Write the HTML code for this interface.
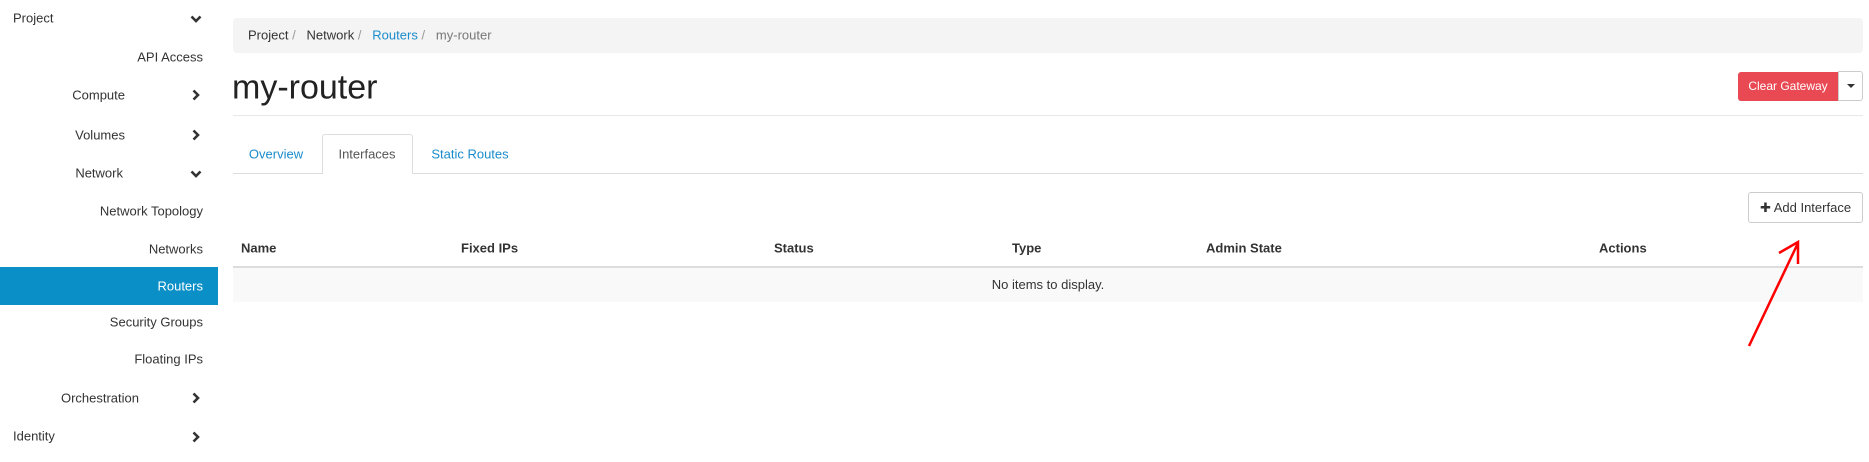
<!DOCTYPE html>
<html><head><style>
*{box-sizing:border-box;margin:0;padding:0}
body{width:1869px;height:462px;background:#fff;font-family:"Liberation Sans",sans-serif;font-size:13px;color:#333;position:relative;overflow:hidden}
.a{position:absolute;white-space:nowrap}
.side{position:absolute;left:0;top:0;width:218px;height:462px}
.it{position:absolute;right:15px;transform:translateY(-50%);color:#333}
.act{position:absolute;left:0;top:267px;width:218px;height:38px;background:#0a8fc7}
.chev{position:absolute;left:190px;width:12px;height:12px;transform:translateY(-50%)}
.link{color:#1a8ccb}
</style></head><body>
<div class="side">
<div class="act"></div>
<div class="a" style="left:13px;top:18px;transform:translateY(-50%)">Project</div>
<div class="it" style="top:57px">API Access</div>
<div class="it" style="top:95px;right:93px">Compute</div>
<div class="it" style="top:135px;right:93px">Volumes</div>
<div class="it" style="top:173px;right:95px">Network</div>
<div class="it" style="top:211px">Network Topology</div>
<div class="it" style="top:249px">Networks</div>
<div class="it" style="top:286px;color:#fff">Routers</div>
<div class="it" style="top:322px">Security Groups</div>
<div class="it" style="top:359px">Floating IPs</div>
<div class="it" style="top:398px;right:79px">Orchestration</div>
<div class="a" style="left:13px;top:436px;transform:translateY(-50%)">Identity</div>
<svg class="chev" style="top:19px" viewBox="0 0 12 12"><path d="M1.5 3.5L6 8L10.5 3.5" stroke="#333" stroke-width="2.6" fill="none"/></svg>
<svg class="chev" style="top:95px" viewBox="0 0 12 12"><path d="M3.5 1.5L8 6L3.5 10.5" stroke="#333" stroke-width="2.6" fill="none"/></svg>
<svg class="chev" style="top:135px" viewBox="0 0 12 12"><path d="M3.5 1.5L8 6L3.5 10.5" stroke="#333" stroke-width="2.6" fill="none"/></svg>
<svg class="chev" style="top:174px" viewBox="0 0 12 12"><path d="M1.5 3.5L6 8L10.5 3.5" stroke="#333" stroke-width="2.6" fill="none"/></svg>
<svg class="chev" style="top:398px" viewBox="0 0 12 12"><path d="M3.5 1.5L8 6L3.5 10.5" stroke="#333" stroke-width="2.6" fill="none"/></svg>
<svg class="chev" style="top:437px" viewBox="0 0 12 12"><path d="M3.5 1.5L8 6L3.5 10.5" stroke="#333" stroke-width="2.6" fill="none"/></svg>
</div>

<div class="a" style="left:233px;top:18px;width:1630px;height:35px;background:#f4f4f4;border-radius:4px"></div>
<div class="a" style="left:248px;top:35px;transform:translateY(-50%)">Project <span style="color:#999">/</span>&nbsp;&nbsp; Network <span style="color:#999">/</span>&nbsp;&nbsp; <span class="link">Routers</span> <span style="color:#999">/</span>&nbsp;&nbsp; <span style="color:#777">my-router</span></div>

<div class="a" style="left:232px;top:88px;transform:translateY(-50%);font-size:34px;color:#222">my-router</div>
<div class="a" style="left:1738px;top:72px;width:100px;height:29px;background:#e84953;border-radius:3px 0 0 3px;color:#fff;font-size:12px;line-height:29px;text-align:center">Clear Gateway</div>
<div class="a" style="left:1838px;top:71px;width:25px;height:30px;border:1px solid #ccc;border-radius:0 3px 3px 0"></div>
<div class="a" style="left:1847px;top:84px;width:0;height:0;border-left:4px solid transparent;border-right:4px solid transparent;border-top:4px solid #333"></div>
<div class="a" style="left:233px;top:115px;width:1630px;height:1px;background:#e8e8e8"></div>

<div class="a" style="left:233px;top:173px;width:1630px;height:1px;background:#ddd"></div>
<div class="a" style="left:322px;top:134px;width:91px;height:40px;border:1px solid #ddd;border-bottom:none;border-radius:3px 3px 0 0;background:#fff"></div>
<div class="a link" style="left:276px;top:154px;transform:translate(-50%,-50%)">Overview</div>
<div class="a" style="left:367px;top:154px;transform:translate(-50%,-50%);color:#555">Interfaces</div>
<div class="a link" style="left:470px;top:154px;transform:translate(-50%,-50%)">Static Routes</div>

<div class="a" style="left:1748px;top:192px;width:115px;height:31px;border:1px solid #ccc;border-radius:3px;line-height:29px;text-align:center;color:#333">✚ Add Interface</div>

<div class="a" style="top:248px;left:0;width:1869px;font-weight:bold;color:#333">
<span class="a" style="left:241px;transform:translateY(-50%)">Name</span>
<span class="a" style="left:461px;transform:translateY(-50%)">Fixed IPs</span>
<span class="a" style="left:774px;transform:translateY(-50%)">Status</span>
<span class="a" style="left:1012px;transform:translateY(-50%)">Type</span>
<span class="a" style="left:1206px;transform:translateY(-50%)">Admin State</span>
<span class="a" style="left:1599px;transform:translateY(-50%)">Actions</span>
</div>
<div class="a" style="left:233px;top:266px;width:1630px;height:2px;background:#ddd"></div>
<div class="a" style="left:233px;top:268px;width:1630px;height:34px;background:#f9f9f9;text-align:center;line-height:34px">No items to display.</div>

<svg class="a" style="left:0;top:0" width="1869" height="462"><path d="M1749 346L1798 243M1779 253L1798 242L1798 264" stroke="#f00" stroke-width="2.5" fill="none"/></svg>
</body></html>
